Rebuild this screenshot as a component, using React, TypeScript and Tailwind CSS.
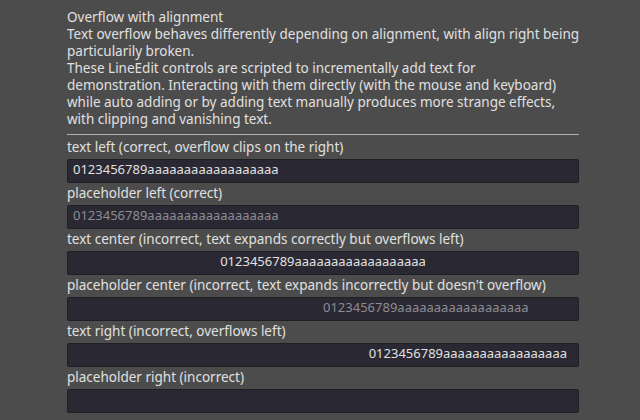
import React from 'react'

const VALUE = '0123456789aaaaaaaaaaaaaaaaaa'

type Row = {
  label: string
  text: string
  placeholder?: boolean
  align: 'left' | 'center' | 'right' | 'offset'
}

const rows: Row[] = [
  { label: 'text left (correct, overflow clips on the right)', text: VALUE, align: 'left' },
  { label: 'placeholder left (correct)', text: VALUE, placeholder: true, align: 'left' },
  {
    label: 'text center (incorrect, text expands correctly but overflows left)',
    text: VALUE,
    align: 'center'
  },
  {
    label: "placeholder center (incorrect, text expands incorrectly but doesn't overflow)",
    text: VALUE,
    placeholder: true,
    align: 'offset'
  },
  { label: 'text right (incorrect, overflows left)', text: VALUE.slice(0, -1), align: 'right' },
  { label: 'placeholder right (incorrect)', text: '', placeholder: true, align: 'right' }
]

const alignClass = {
  left: 'justify-start pl-[5px]',
  center: 'justify-center',
  right: 'justify-end pr-[11px]',
  offset: 'justify-start pl-[255px]'
}

function LineEdit({ row }: { row: Row }) {
  return (
    <div
      className={`flex h-[24px] overflow-hidden whitespace-nowrap rounded-[2px] border border-[#1f1e25] bg-[#2a2832] text-[13px] leading-[19px] ${alignClass[row.align]} ${
        row.placeholder ? 'text-[#8e8d93]' : 'text-[#e0e0e0]'
      }`}
    >
      <span>{row.text}</span>
    </div>
  )
}

export default function App() {
  return (
    <div
      className="h-[420px] w-[640px] overflow-hidden bg-[#4c4c4c] pl-[67px] pt-[9px] text-[13.5px] text-[#e0e0e0]"
      style={{ fontFamily: '"Noto Sans", "Open Sans", sans-serif' }}
    >
      <div className="w-[512px]">
        <div className="whitespace-nowrap leading-[17px]">
          <div>Overflow with alignment</div>
          <div>
            Text overflow behaves differently depending on alignment, with align right being
          </div>
          <div>particularily broken.</div>
          <div>These LineEdit controls are scripted to incrementally add text for</div>
          <div>demonstration. Interacting with them directly (with the mouse and keyboard)</div>
          <div>while auto adding or by adding text manually produces more strange effects,</div>
          <div>with clipping and vanishing text.</div>
        </div>
        <div className="my-[6px] h-px bg-[#aeaeae]" />
        <div className="flex flex-col gap-[4px]">
          {rows.map((row) => (
            <div key={row.label} className="flex flex-col gap-[4px]">
              <div className="h-[14px] whitespace-nowrap leading-[12px]">{row.label}</div>
              <LineEdit row={row} />
            </div>
          ))}
        </div>
      </div>
    </div>
  )
}
